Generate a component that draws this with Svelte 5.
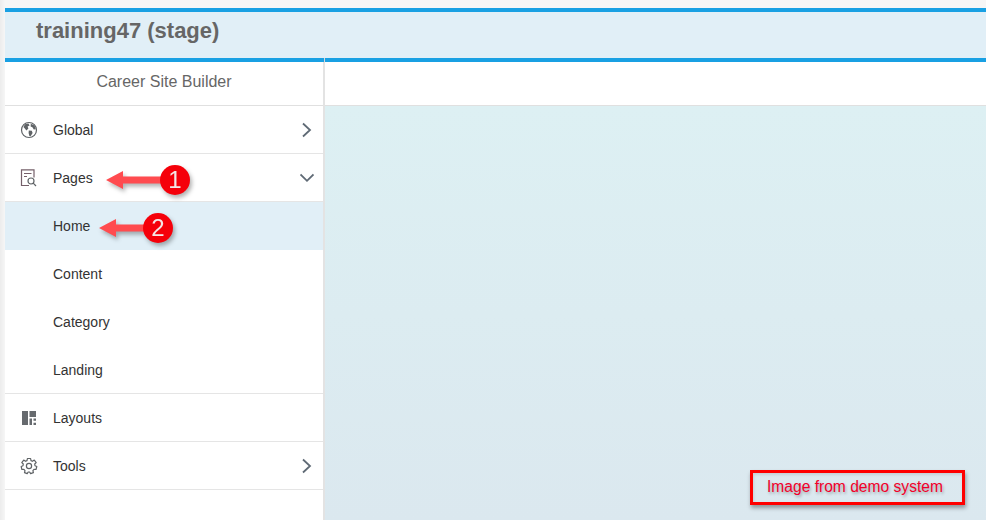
<script>
  const submenu = ['Home', 'Content', 'Category', 'Landing'];
</script>

<div class="page">
  <header class="topbar">
    <h1>training47 (stage)</h1>
  </header>

  <div class="main">
    <aside class="sidebar">
      <div class="brand">Career Site Builder</div>

      <nav>
        <div class="row">
          <svg class="icon" viewBox="0 0 18 18" width="18" height="18">
            <circle cx="9" cy="9" r="7.5" fill="none" stroke="#5f6366" stroke-width="1.2" />
            <path d="M5 3.2 8.4 2.6 9.6 4.6 7.6 5.6 8.4 7.6 6.4 9.4 4.4 7 3.4 6ZM10.8 2.8 14.6 4.6 15.8 8.2 13.8 8.6 12.4 6.2 10.6 5.4ZM8.8 9.6 11.8 9.8 12.6 12 10.6 15.2 9.4 15 8.6 12Z" fill="#5f6366" />
          </svg>
          <span class="label">Global</span>
          <svg class="chev" viewBox="0 0 14 16" width="14" height="16">
            <path d="M3 1.5 10 8 3 14.5" fill="none" stroke="#5f6a75" stroke-width="1.8" />
          </svg>
        </div>

        <div class="row">
          <svg class="icon" viewBox="0 0 18 18" width="18" height="18">
            <path d="M9 16.5H1.5V0.8H14V8.5M4 4.5H11.5M4 7.5H7" fill="none" stroke="#75606a" stroke-width="1.2" />
            <circle cx="11" cy="12" r="3" fill="none" stroke="#5f6366" stroke-width="1.2" />
            <path d="M13.2 14.2 16 17" fill="none" stroke="#5f6366" stroke-width="1.2" />
          </svg>
          <span class="label">Pages</span>
          <svg class="chev" viewBox="0 0 14 14" width="14" height="14">
            <path d="M0.5 3.5 7 9.8 13.5 3.5" fill="none" stroke="#5f6a75" stroke-width="1.8" />
          </svg>
        </div>

        <div class="group">
          {#each submenu as item, i}
            <div class="sub" class:active={i === 0}>{item}</div>
          {/each}
        </div>

        <div class="row">
          <svg class="icon" viewBox="0 0 18 18" width="18" height="18">
            <path d="M2 2H8V16H2ZM9.5 2H16V8H9.5ZM9.5 9.5H12V16H9.5ZM13.5 9.5H16V11.8H13.5ZM13.5 13.7H16V16H13.5Z" fill="#666a6e" />
          </svg>
          <span class="label">Layouts</span>
        </div>

        <div class="row">
          <svg class="icon" viewBox="0 0 18 18" width="18" height="18">
            <path d="M7.4 1.5H10.6L11 3.6 12.5 4.3 14.3 3.1 16.2 5.6 14.7 7 15 8.7 16.8 9.5 16 12.5 14 12.3 12.9 13.6 13.4 15.6 10.6 16.6 9.6 15H8.2L7.2 16.6 4.5 15.6 5 13.6 3.9 12.3 1.9 12.5 1.2 9.5 3 8.7 3.3 7 1.8 5.6 3.7 3.1 5.5 4.3 7 3.6Z" fill="none" stroke="#5f6366" stroke-width="1.2" stroke-linejoin="round" />
            <circle cx="9" cy="9" r="2.6" fill="none" stroke="#5f6366" stroke-width="1.2" />
          </svg>
          <span class="label">Tools</span>
          <svg class="chev" viewBox="0 0 14 16" width="14" height="16">
            <path d="M3 1.5 10 8 3 14.5" fill="none" stroke="#5f6a75" stroke-width="1.8" />
          </svg>
        </div>
      </nav>
    </aside>

    <section class="content">
      <div class="strip"></div>
      <div class="canvas"></div>
    </section>
  </div>

  <!-- screenshot annotations drawn over the page -->
  <div class="callout one">
    <svg viewBox="0 0 60 20" width="60" height="20">
      <path d="M0 10 17 1V6.5H60V13.5H17V19Z" fill="#ff4b4f" />
    </svg>
    <span class="badge">1</span>
  </div>
  <div class="callout two">
    <svg viewBox="0 0 50 20" width="50" height="20">
      <path d="M0 10 17 1V6.5H50V13.5H17V19Z" fill="#ff4b4f" />
    </svg>
    <span class="badge">2</span>
  </div>
  <div class="divider-tick"></div>
  <div class="note">Image from demo system</div>
</div>

<style>
  :global(body) {
    margin: 0;
    background: #fff;
  }

  .page {
    position: relative;
    width: 986px;
    height: 520px;
    overflow: hidden;
    box-sizing: border-box;
    padding: 8px 0 0 5px;
    background: linear-gradient(90deg, #ececec 0, #f6f6f6 5px);
    font-family: "Liberation Sans", Arial, sans-serif;
    display: flex;
    flex-direction: column;
  }

  .topbar {
    height: 46px;
    flex-shrink: 0;
    background: #e1eff7;
    border-top: 4px solid #19a0e3;
    border-bottom: 4px solid #19a0e3;
    padding-left: 31px;
    display: flex;
    align-items: center;
  }

  h1 {
    margin: 0 0 8px;
    font-size: 22px;
    font-weight: 700;
    color: #666;
  }

  .main {
    flex: 1;
    display: flex;
    min-height: 0;
  }

  .sidebar {
    width: 318px;
    flex-shrink: 0;
    background: #fff;
    border-right: 2px solid #e3e3e3;
  }

  .brand {
    height: 43px;
    line-height: 40px;
    text-align: center;
    font-size: 16px;
    color: #666;
    border-bottom: 1px solid #e0e0e0;
  }

  .row {
    height: 47px;
    display: flex;
    align-items: center;
    border-bottom: 1px solid #e5e5e5;
    font-size: 14px;
    color: #333;
    padding: 0 9px 0 15px;
  }

  .icon {
    width: 18px;
    height: 18px;
    flex-shrink: 0;
    margin-right: 15px;
  }

  .label {
    flex: 1;
  }

  .chev {
    flex-shrink: 0;
  }

  .group {
    height: 191px;
    overflow: hidden;
    border-bottom: 1px solid #e5e5e5;
  }

  .sub {
    height: 48px;
    line-height: 48px;
    padding-left: 48px;
    font-size: 14px;
    color: #333;
  }

  .sub.active {
    background: #e1eff7;
  }

  .content {
    flex: 1;
    display: flex;
    flex-direction: column;
    min-width: 0;
  }

  .strip {
    height: 43px;
    flex-shrink: 0;
    background: #fff;
    border-bottom: 1px solid #e0e0e0;
  }

  .canvas {
    flex: 1;
    background: linear-gradient(180deg, #ddf0f3 0%, #dbe8ef 100%);
  }

  .divider-tick {
    position: absolute;
    left: 324px;
    top: 58px;
    width: 1px;
    height: 4px;
    background: #d8d8d8;
  }

  .callout {
    position: absolute;
    display: flex;
    align-items: center;
    filter: drop-shadow(2px 3px 2px rgba(0, 0, 0, 0.3));
  }

  .callout.one {
    left: 106px;
    top: 165px;
  }

  .callout.two {
    left: 99px;
    top: 213px;
  }

  .callout svg {
    margin-right: -6px;
  }

  .badge {
    width: 30px;
    height: 30px;
    border-radius: 50%;
    background: #f5000a;
    color: #f4e6e6;
    font-size: 24px;
    line-height: 30px;
    text-align: center;
  }

  .note {
    position: absolute;
    left: 750px;
    top: 470px;
    width: 215px;
    height: 35px;
    box-sizing: border-box;
    border: 3px solid #ff0000;
    box-shadow: 1px 3px 4px rgba(0, 0, 0, 0.35), inset 1px 2px 3px rgba(0, 0, 0, 0.1);
    color: #f2002a;
    font-size: 15.6px;
    line-height: 27px;
    padding-left: 14px;
    text-shadow: 1px 2px 3px rgba(0, 0, 0, 0.3);
  }
</style>
